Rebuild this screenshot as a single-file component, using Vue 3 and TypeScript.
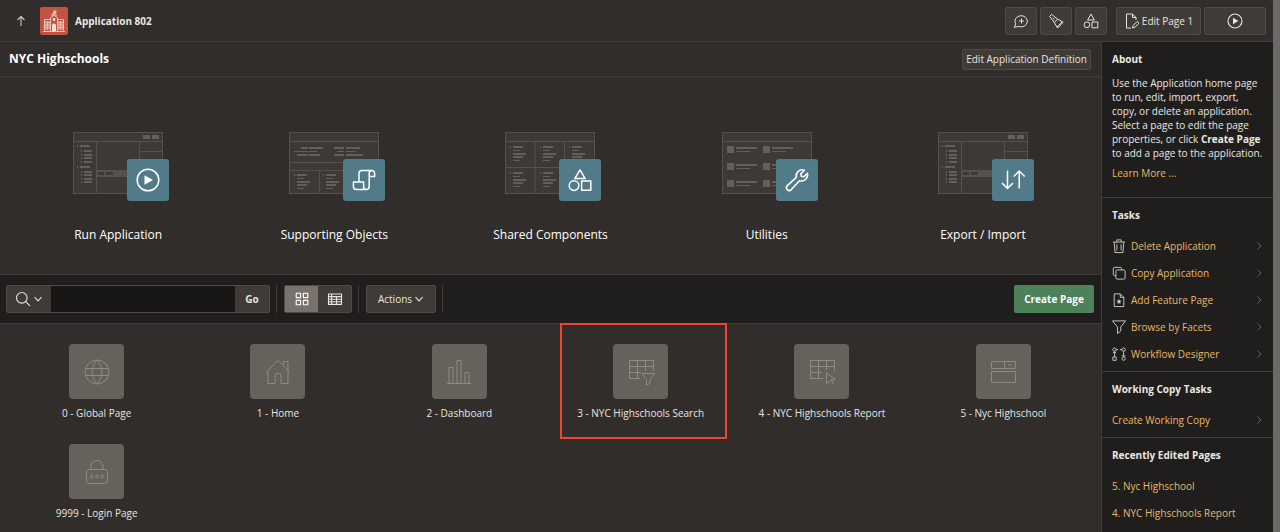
<script setup lang="ts">
import { ref } from 'vue'

interface Icon {
  size: number
  d: string
  f?: string
}

const icons: Record<string, Icon> = {
  up: { size: 16, d: 'M8 13V3.5M4.5 7L8 3.5L11.5 7' },
  comment: { size: 16, d: 'M1.4 14.4L2.6 10.8A6.2 5.6 0 1 1 5.6 13.4Z M8.5 5.5v5M6 8h5' },
  flashlight: { size: 16, d: 'M1.6 3.4L3.6 1.4L9.6 6.2L14.4 8.6L9 14.2L6.2 9.4ZM9.6 6.2L6.2 9.4M14.4 8.6L15 9.4L9.6 15L9 14.2M4.8 4.8l1.6 1.5' },
  shapes: { size: 16, d: 'M8 1L11.4 7H4.6ZM1 11.8a2.9 2.9 0 1 0 5.8 0a2.9 2.9 0 1 0-5.8 0M9 9h5.8v5.8H9Z' },
  edit: { size: 16, d: 'M7 15H2.5V1H8.5L12 4.5V7M8.5 1V4.5H12M8.6 15L9.2 12.4L13.2 8.4L15 10.2L11 14.2Z' },
  play: { size: 16, d: 'M1 8a7 7 0 1 0 14 0a7 7 0 1 0-14 0', f: 'M6 4.8L11.4 8L6 11.2Z' },
  search: { size: 16, d: 'M1.5 6.8a5.3 5.3 0 1 0 10.6 0a5.3 5.3 0 1 0-10.6 0M10.7 10.6L15 14.8' },
  down: { size: 10, d: 'M1.5 3.2L5 6.8L8.5 3.2' },
  right: { size: 10, d: 'M3.2 0.5L7.5 5L3.2 9.5' },
  grid: { size: 16, d: 'M2.2 2.2h4.4v4.4H2.2ZM9.4 2.2h4.4v4.4H9.4ZM2.2 9.4h4.4v4.4H2.2ZM9.4 9.4h4.4v4.4H9.4Z' },
  table: { size: 16, d: 'M1.5 3h13v10.4h-13ZM1.5 5.6h13M1.5 8.2h13M1.5 10.8h13M4.6 3v10.4M9.6 5.6v7.8' },
  scroll: { size: 24, d: 'M7 14V5.4A3 3 0 0 1 10 2.4H19.8A2.8 2.8 0 0 1 22.6 5.2V8.6H17.2M17.2 8.6V5.2A2.8 2.8 0 0 1 19.8 2.4M17.2 8.6V18.4A3 3 0 0 1 14.2 21.4A2.6 2.6 0 0 1 11.6 18.8V14H1.4V18.4A3 3 0 0 0 4.4 21.4H14.2' },
  bigShapes: { size: 24, d: 'M12 1.8L17.2 10.6H6.8ZM1.2 17.6a4.8 4.8 0 1 0 9.6 0a4.8 4.8 0 1 0-9.6 0M13.6 13h9.2v9.2h-9.2Z' },
  bigPlay: { size: 24, d: 'M1.2 12a10.8 10.8 0 1 0 21.6 0a10.8 10.8 0 1 0-21.6 0', f: 'M8.5 7.2L17 12L8.5 16.8Z' },
  wrench: { size: 24, d: 'M19.4 2.1L15.8 5.7L16.3 8.3L18.9 8.8L22.4 5.2A6.2 6.2 0 0 1 14.5 12.7L6.3 21.6A2.8 2.8 0 0 1 2.3 17.6L11.3 9.4A6.2 6.2 0 0 1 19.4 2.1Z' },
  transfer: { size: 24, d: 'M6.5 2.5V20.5M1 15L6.5 20.5L12 15M18.2 20.5V3M12.7 8.5L18.2 3L23.7 8.5' },
  globe: { size: 26, d: 'M1 13a12 12 0 1 0 24 0a12 12 0 1 0-24 0M13 1C6.5 7 6.5 19 13 25M13 1C19.5 7 19.5 19 13 25M2 9.5h22M2 16.5h22' },
  home: { size: 26, d: 'M1.5 12.8L13 1.5L24.5 12.8M3 11.5V24.5H10V17A3 3 0 0 1 16 17V24.5H23V11.5M18.5 6.5V2.5H23V11' },
  bars: { size: 26, d: 'M1 24.5H25M3 24.5V8.5H7V24.5M11 24.5V1.5H15V24.5M19 24.5V13.5H23V24.5' },
  filterTable: { size: 26, d: 'M25.5 12V1.5H1.5V19.5H12M1.5 7.5H25.5M1.5 13.5H13M9.5 1.5V19.5M17.5 1.5V12M14 14.5H26.5L22 20.5V24.5L18.5 26V20.5Z' },
  pointTable: { size: 26, d: 'M25.5 12V1.5H1.5V19.5H14M1.5 7.5H25.5M1.5 13.5H13M9.5 1.5V19.5M17.5 1.5V11M17.5 14L26.3 20.5L22.5 21L24.5 25.5M22.5 21L17.5 24.5V14' },
  form: { size: 26, d: 'M1.5 2.5H25.5V9.5H1.5ZM1.5 12.5H25.5V23.5H1.5ZM14.5 2.5V9.5M18 5L20 7L22 5' },
  lock: { size: 26, d: 'M5.5 10.5H20.5A3 3 0 0 1 23.5 13.5V21.5A3 3 0 0 1 20.5 24.5H5.5A3 3 0 0 1 2.5 21.5V13.5A3 3 0 0 1 5.5 10.5ZM7 10.5V7.5A6 6 0 0 1 19 7.5V10.5M6.5 17.5a1.3 1.5 0 1 0 2.6 0a1.3 1.5 0 1 0-2.6 0M11.7 17.5a1.3 1.5 0 1 0 2.6 0a1.3 1.5 0 1 0-2.6 0M16.9 17.5a1.3 1.5 0 1 0 2.6 0a1.3 1.5 0 1 0-2.6 0' },
  trash: { size: 16, d: 'M1 3.5H15M5.5 3.5V1H10.5V3.5M2.6 3.5L3.4 15.5H12.6L13.4 3.5M5.6 6V13M10.4 6V13' },
  copy: { size: 16, d: 'M4.5 11H3A1.5 1.5 0 0 1 1.5 9.5V3A1.5 1.5 0 0 1 3 1.5H9.5A1.5 1.5 0 0 1 11 3V4.5M6 4.5H13.5A1.5 1.5 0 0 1 15 6V13.5A1.5 1.5 0 0 1 13.5 15H6A1.5 1.5 0 0 1 4.5 13.5V6A1.5 1.5 0 0 1 6 4.5Z' },
  feature: { size: 16, d: 'M2.5 1H9.5L13.5 5V15.5H2.5ZM9.5 1V5H13.5', f: 'M8 6.7L8.8 8.7L11 8.9L9.3 10.3L9.9 12.5L8 11.3L6.1 12.5L6.7 10.3L5 8.9L7.2 8.7Z' },
  funnel: { size: 16, d: 'M0.5 1H15.5L10 8V12.5L6.3 15.5V8Z' },
  flow: { size: 16, d: 'M1 3a1.9 1.9 0 1 0 3.8 0a1.9 1.9 0 1 0-3.8 0M11.4 3a1.9 1.9 0 1 0 3.8 0a1.9 1.9 0 1 0-3.8 0M1 11.4h3.8v3.8H1ZM11.4 13.3a1.9 1.9 0 1 0 3.8 0a1.9 1.9 0 1 0-3.8 0M2.9 4.9V11.4M4.8 3H7M13.3 4.9V11.4M1.2 7L2.9 5L4.6 7M9 3H11.4M11.6 9.4L13.3 11.4L15 9.4' },
}

type Rect = [number, number, number, number]

const treeRows: Rect[] = [
  [4, 13, 1, 2], [7, 13, 10, 2], [4, 34, 1, 2], [7, 34, 10, 2],
  ...[18, 22, 25, 29, 39, 42, 46, 49].flatMap((y): Rect[] => [[8, y, 1, 2], [11, y, 8, 2]]),
]
const builder = {
  lines: 'M0 9.5H90M23.5 9.5V62M66.5 9.5V38M66.5 19.5H90M23.5 38.5H90M23.5 44.5H90',
  bars: [...treeRows, [70, 3, 7, 4], [79, 3, 7, 4]] as Rect[],
  band: true,
}
const listAt = (x: number, y: number): Rect[] => [
  [x, y, 1, 2], [x + 3, y, 10, 2], [x + 3, y + 4, 7, 1], [x + 3, y + 7, 13, 2], [x + 3, y + 10, 10, 2], [x + 3, y + 14, 7, 1],
]
const supporting = {
  lines: 'M0 9.5H90M0 30.5H90M0 38.5H90M30.5 38.5V62M60.5 38.5V62',
  bars: [
    [12, 15, 7, 2], [20, 15, 14, 2], [5, 19, 14, 1], [20, 19, 8, 1], [8, 22, 11, 2], [20, 22, 11, 2],
    [45, 15, 10, 2], [57, 15, 14, 2], [48, 19, 7, 1], [57, 19, 10, 1], [45, 22, 10, 2], [57, 22, 17, 2],
    ...listAt(5, 42), ...listAt(34, 42),
  ] as Rect[],
  band: false,
}
const shared = {
  lines: 'M0 9.5H90M0 35.5H90M30 9.5V62M59.5 9.5V62',
  bars: [5, 35, 64].flatMap((x) => [...listAt(x, 14), ...listAt(x, 40)]),
  band: false,
}
const utilities = {
  lines: 'M0 9.5H90',
  bars: [14, 31, 48].flatMap((y): Rect[] => [
    [5, y, 7, 7], [14, y + 1, 21, 2], [14, y + 5, 14, 1], [41, y, 7, 7], [50, y + 1, 21, 2], [50, y + 5, 14, 1],
  ]),
  band: false,
}

const cards = [
  { label: 'Run Application', icon: 'bigPlay', art: builder },
  { label: 'Supporting Objects', icon: 'scroll', art: supporting },
  { label: 'Shared Components', icon: 'bigShapes', art: shared },
  { label: 'Utilities', icon: 'wrench', art: utilities },
  { label: 'Export / Import', icon: 'transfer', art: builder },
]

const pages = [
  { label: '0 - Global Page', icon: 'globe' },
  { label: '1 - Home', icon: 'home' },
  { label: '2 - Dashboard', icon: 'bars' },
  { label: '3 - NYC Highschools Search', icon: 'filterTable', marked: true },
  { label: '4 - NYC Highschools Report', icon: 'pointTable' },
  { label: '5 - Nyc Highschool', icon: 'form' },
  { label: '9999 - Login Page', icon: 'lock' },
]

const tasks = [
  { label: 'Delete Application', icon: 'trash' },
  { label: 'Copy Application', icon: 'copy' },
  { label: 'Add Feature Page', icon: 'feature' },
  { label: 'Browse by Facets', icon: 'funnel' },
  { label: 'Workflow Designer', icon: 'flow' },
]

const tools = [
  { label: 'Comments', icon: 'comment' },
  { label: 'Find', icon: 'flashlight' },
  { label: 'Shared Components', icon: 'shapes' },
]

const recent = ['5. Nyc Highschool', '4. NYC Highschools Report']
const query = ref('')
const view = ref<'icons' | 'report'>('icons')

const box = (name: string) => `0 0 ${icons[name].size} ${icons[name].size}`
</script>

<template>
  <div class="shell">
    <div class="app">
      <header class="top">
        <a href="#" class="up" aria-label="Up">
          <svg class="ico i16" :viewBox="box('up')"><path :d="icons.up.d" /></svg>
        </a>
        <svg class="logo" viewBox="0 0 28 28" aria-hidden="true">
          <rect width="28" height="28" rx="2" fill="#c25342" />
          <g fill="none" stroke="#f6e3de" stroke-width="0.8">
            <path d="M3 24.5H25M4.5 24V12.5H10.5M23.5 24V12.5H17.5M10.5 24V11L14 8L17.5 11V24M14 8V3.5M14 4H16V5.5H14M12 9.5V7L14 5.5L16 7V9.5" />
            <path d="M6 14V23M7.5 14V23M9 14V23M19 14V23M20.5 14V23M22 14V23" stroke-width="0.7" />
            <path d="M4.5 15.5H10M4.5 18H10M4.5 20.5H10M18 15.5H23.5M18 18H23.5M18 20.5H23.5" stroke-width="0.5" />
          </g>
          <circle cx="14" cy="12.5" r="1.4" fill="#f6e3de" />
          <path d="M12 24V18.5A2 2 0 0 1 16 18.5V24Z" fill="#f6e3de" />
        </svg>
        <strong class="app-name">Application 802</strong>
        <div class="tools">
          <button v-for="t in tools" :key="t.icon" type="button" class="btn square" :aria-label="t.label">
            <svg class="ico i16" :viewBox="box(t.icon)"><path :d="icons[t.icon].d" /></svg>
          </button>
          <button type="button" class="btn edit">
            <svg class="ico i16" :viewBox="box('edit')"><path :d="icons.edit.d" /></svg>
            Edit Page 1
          </button>
          <button type="button" class="btn run" aria-label="Run page">
            <svg class="ico i16" :viewBox="box('play')"><path :d="icons.play.d" /><path class="solid" :d="icons.play.f" /></svg>
          </button>
        </div>
      </header>

      <div class="body">
        <main class="main">
          <div class="title-bar">
            <h1>NYC Highschools</h1>
            <button type="button" class="btn definition">Edit Application Definition</button>
          </div>

          <nav class="cards">
            <a v-for="c in cards" :key="c.label" href="#" class="card">
              <span class="art">
                <svg class="frame" viewBox="0 0 90 62">
                  <rect x="0.5" y="0.5" width="89" height="61" fill="#3d3935" stroke="#55514b" />
                  <rect v-if="c.art.band" x="24" y="38" width="66" height="7" fill="#55514b" />
                  <path :d="c.art.lines" fill="none" stroke="#55514b" />
                  <template v-if="c.art.band">
                    <rect x="25" y="40" width="6" height="3" fill="#3d3935" />
                    <rect x="33" y="40" width="7" height="3" fill="#3d3935" />
                  </template>
                  <rect v-for="(r, i) in c.art.bars" :key="i" :x="r[0]" :y="r[1]" :width="r[2]" :height="r[3]" fill="#645f59" />
                </svg>
                <span class="badge">
                  <svg class="ico i24" :viewBox="box(c.icon)">
                    <path :d="icons[c.icon].d" />
                    <path v-if="icons[c.icon].f" class="solid" :d="icons[c.icon].f" />
                  </svg>
                </span>
              </span>
              <span class="card-label">{{ c.label }}</span>
            </a>
          </nav>

          <form class="toolbar" @submit.prevent>
            <div class="search">
              <button type="button" class="btn pick" aria-label="Select columns to search">
                <svg class="ico i16" :viewBox="box('search')"><path :d="icons.search.d" /></svg>
                <svg class="ico i10" :viewBox="box('down')"><path :d="icons.down.d" /></svg>
              </button>
              <input v-model="query" type="text" aria-label="Search pages" />
              <button type="submit" class="btn go">Go</button>
            </div>
            <i class="sep"></i>
            <div class="views">
              <button type="button" class="btn view" :class="{ on: view === 'icons' }" aria-label="View icons" @click="view = 'icons'">
                <svg class="ico i16" :viewBox="box('grid')"><path :d="icons.grid.d" /></svg>
              </button>
              <button type="button" class="btn view" :class="{ on: view === 'report' }" aria-label="View report" @click="view = 'report'">
                <svg class="ico i16" :viewBox="box('table')"><path :d="icons.table.d" /></svg>
              </button>
            </div>
            <i class="sep"></i>
            <button type="button" class="btn actions">
              Actions
              <svg class="ico i10" :viewBox="box('down')"><path :d="icons.down.d" /></svg>
            </button>
            <i class="sep"></i>
            <button type="button" class="btn create">Create Page</button>
          </form>

          <ul class="pages">
            <li v-for="p in pages" :key="p.label" :class="{ marked: p.marked }">
              <a href="#">
                <span class="tile">
                  <svg class="ico i26" :viewBox="box(p.icon)"><path :d="icons[p.icon].d" /></svg>
                </span>
                {{ p.label }}
              </a>
            </li>
          </ul>
        </main>

        <aside class="side">
          <section class="about">
            <h2>About</h2>
            <p>
              Use the Application home page to run, edit, import, export, copy, or delete an application. Select a page to
              edit the page properties, or click <strong>Create Page</strong> to add a page to the application.
            </p>
            <a href="#">Learn More ...</a>
          </section>
          <section>
            <h2>Tasks</h2>
            <a v-for="t in tasks" :key="t.label" href="#" class="row">
              <svg class="ico i14" :viewBox="box(t.icon)">
                <path :d="icons[t.icon].d" />
                <path v-if="icons[t.icon].f" class="solid" :d="icons[t.icon].f" />
              </svg>
              <span>{{ t.label }}</span>
              <svg class="ico i8 chevron" :viewBox="box('right')"><path :d="icons.right.d" /></svg>
            </a>
          </section>
          <section>
            <h2>Working Copy Tasks</h2>
            <a href="#" class="row">
              <span>Create Working Copy</span>
              <svg class="ico i8 chevron" :viewBox="box('right')"><path :d="icons.right.d" /></svg>
            </a>
          </section>
          <section>
            <h2>Recently Edited Pages</h2>
            <a v-for="r in recent" :key="r" href="#" class="row"><span>{{ r }}</span></a>
          </section>
        </aside>
      </div>
    </div>
    <div class="gutter"></div>
  </div>
</template>

<style>
body {
  margin: 0;
  background: #312d2a;
}
</style>

<style scoped>
* {
  box-sizing: border-box;
}
.shell {
  display: flex;
  height: 100vh;
  overflow: hidden;
  color: #eae7e3;
  font: 10px/14px "Open Sans", "Noto Sans", sans-serif;
}
.app {
  flex: 1;
  min-width: 0;
  display: flex;
  flex-direction: column;
  background: #312d2a;
}
.gutter {
  width: 7px;
  background: #6b6965;
}
a {
  color: #e9b768;
  text-decoration: none;
}
.ico {
  flex: none;
  display: block;
  fill: none;
  stroke: currentColor;
  stroke-width: 1.1;
  stroke-linejoin: round;
  overflow: visible;
}
.solid {
  fill: currentColor;
  stroke: none;
}
.i8 { width: 8px; height: 8px; }
.i10 { width: 10px; height: 10px; }
.i14 { width: 14px; height: 14px; }
.i16 { width: 16px; height: 16px; }
.i24 { width: 24px; height: 24px; stroke-width: 1.5; }
.i26 { width: 26px; height: 26px; stroke-width: 1; }
.btn {
  display: flex;
  align-items: center;
  justify-content: center;
  height: 28px;
  padding: 0;
  border: 1px solid #4e4a45;
  border-radius: 2px;
  background: #3f3b37;
  color: #e8e5e1;
  font: inherit;
  cursor: pointer;
}
.top {
  display: flex;
  align-items: center;
  height: 42px;
  padding: 0 7px 0 13px;
  border-bottom: 1px solid #403c38;
}
.up {
  color: #c9c6c2;
}
.logo {
  width: 28px;
  height: 28px;
  margin: 0 7px 0 11px;
}
.tools {
  display: flex;
  gap: 3px;
  margin-left: auto;
}
.square {
  width: 32px;
}
.square .ico,
.edit .ico {
  stroke-width: 1;
}
.edit {
  width: 85px;
  margin-left: 6px;
  gap: 2px;
}
.run {
  width: 62px;
}
.body {
  flex: 1;
  display: flex;
  min-height: 0;
}
.main {
  flex: 1;
  min-width: 0;
}
.title-bar {
  display: flex;
  align-items: center;
  justify-content: space-between;
  height: 36px;
  padding: 0 10px 0 9px;
  border-bottom: 2px solid #3a3633;
}
h1 {
  margin: 0;
  font-size: 12px;
  line-height: 18px;
  color: #fff;
}
.definition {
  height: 21px;
  padding: 0 3px;
}
.cards {
  display: grid;
  grid-template-columns: repeat(5, 1fr);
  padding: 54px 10px 30px;
}
.card {
  display: flex;
  flex-direction: column;
  align-items: center;
  gap: 32px;
  color: #fff;
  font-size: 12px;
  line-height: 18px;
}
.art {
  position: relative;
  display: block;
  width: 90px;
  height: 62px;
}
.frame {
  display: block;
  width: 90px;
  height: 62px;
}
.badge {
  position: absolute;
  right: -6px;
  bottom: -7px;
  display: grid;
  place-items: center;
  width: 42px;
  height: 42px;
  border-radius: 3px;
  background: #527b89;
  color: #fff;
}
.toolbar {
  display: flex;
  align-items: center;
  height: 50px;
  padding: 0 7px 0 6px;
  border-top: 1px solid #3f3c39;
  border-bottom: 1px solid #3f3c39;
  background: #201e1c;
}
.search {
  display: flex;
  width: 264px;
  border: 1px solid #4e4a45;
  border-radius: 2px;
  background: #191715;
}
.search .btn {
  height: 26px;
  border: 0;
  border-radius: 0;
}
.pick {
  width: 44px;
  gap: 2px;
}
input {
  flex: 1;
  min-width: 0;
  border: 0;
  padding: 0 6px;
  outline: 0;
  background: transparent;
  color: inherit;
  font: inherit;
}
.search .go {
  width: 34px;
  font-weight: 700;
}
.sep {
  width: 1px;
  height: 28px;
  margin: 0 7px 0 6px;
  background: #3f3c39;
}
.views {
  display: flex;
  border: 1px solid #4e4a45;
  border-radius: 2px;
}
.view {
  width: 33px;
  height: 26px;
  border: 0;
  border-radius: 0;
}
.view.on {
  background: #78716c;
  color: #fff;
}
.actions {
  width: 70px;
  gap: 2px;
}
.create {
  width: 80px;
  margin-left: auto;
  border-color: #4d8159;
  background: #4d8159;
  color: #fff;
  font-weight: 700;
}
.pages {
  display: grid;
  grid-template-columns: repeat(6, 1fr);
  margin: 0;
  padding: 0 7px 0 6px;
  list-style: none;
}
.pages li {
  position: relative;
  height: 100px;
  padding-top: 20px;
}
.pages a {
  display: flex;
  flex-direction: column;
  align-items: center;
  gap: 7px;
  color: #e8e5e1;
}
.tile {
  display: grid;
  place-items: center;
  width: 55px;
  height: 55px;
  border-radius: 4px;
  background: #67615c;
  color: #8f8a85;
}
.marked::after {
  content: "";
  position: absolute;
  inset: -1px 4px -15px 10px;
  border: 2px solid #f0452a;
}
.side {
  width: 172px;
  border-left: 1px solid #3f3c39;
  background: #201e1c;
  overflow: hidden;
}
.side section {
  padding: 10px 10px 4px;
  border-bottom: 1px solid #3f3c39;
}
.side section:last-child {
  border-bottom: 0;
}
h2 {
  margin: 0 0 10px;
  font-size: 10px;
  line-height: 14px;
}
.side .about {
  padding-bottom: 17px;
}
p {
  margin: 0 0 6px;
}
.row {
  display: flex;
  align-items: center;
  gap: 5px;
  height: 27px;
}
.row .ico {
  color: #c9c6c2;
}
.row .chevron {
  margin-left: auto;
  color: #6e6a66;
}
</style>
